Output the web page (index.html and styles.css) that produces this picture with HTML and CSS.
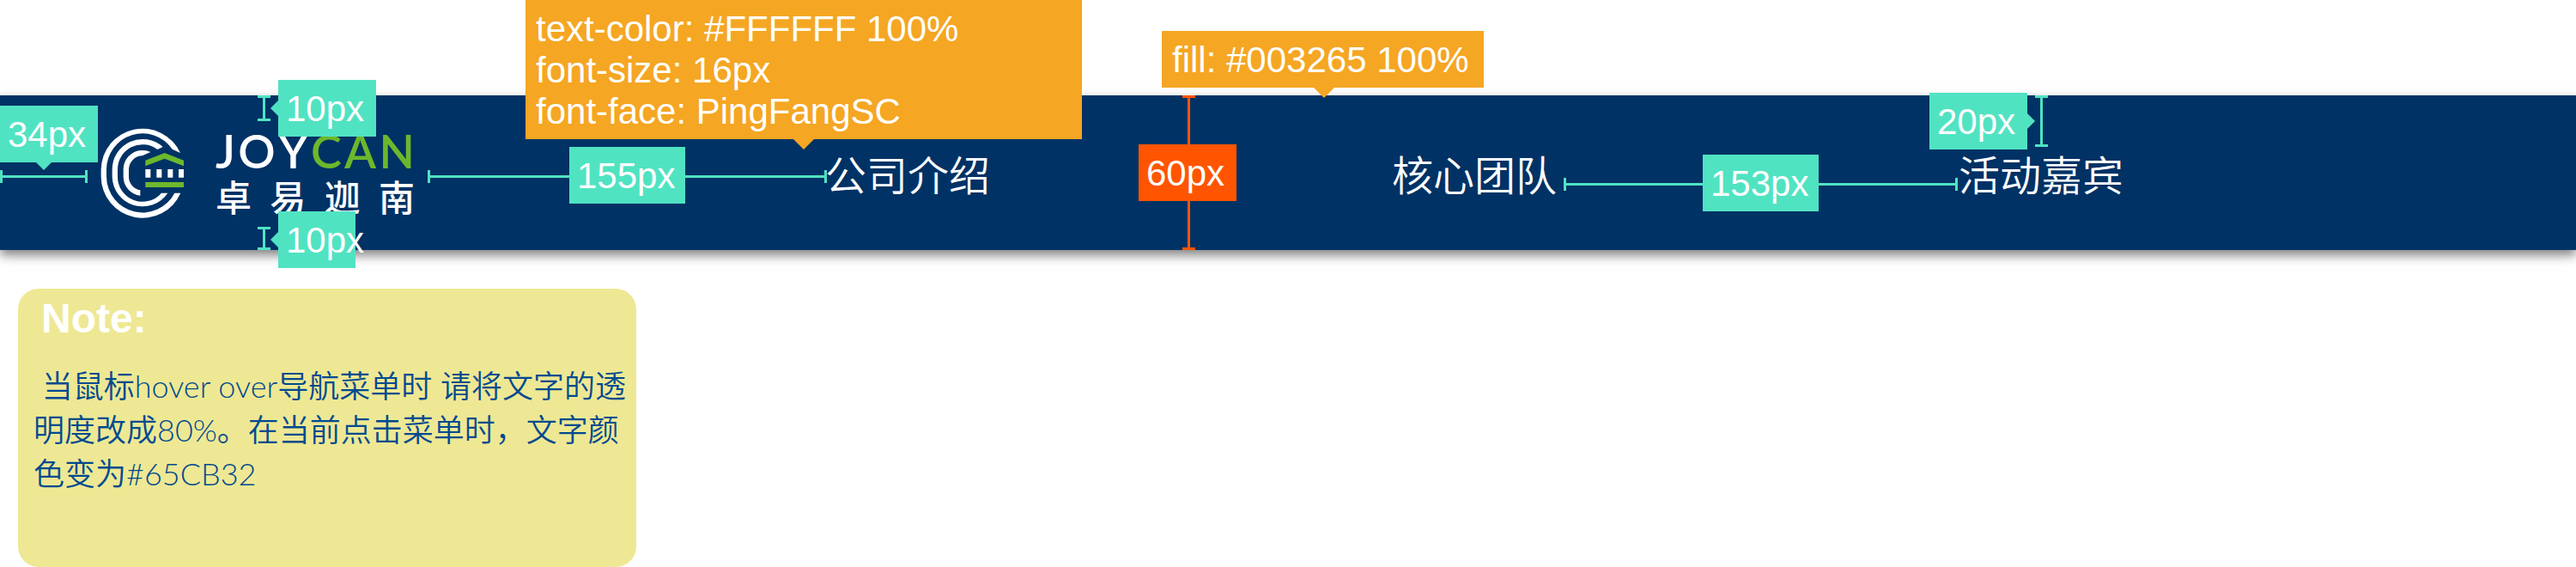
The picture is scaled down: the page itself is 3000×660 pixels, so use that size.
FILE: index.html
```html
<!DOCTYPE html>
<html lang="zh-CN">
<head>
<meta charset="utf-8">
<title>JOYCAN 导航规范</title>
<meta name="viewport" content="width=device-width, initial-scale=1">
<link rel="stylesheet" href="styles.css">
</head>
<body>
<div class="board">
  <header class="header">
    <a class="logo" href="#">
      <svg class="logo-mark" viewBox="351 177 294 321" aria-hidden="true">
        <g fill="#fff">
          <path d="M630 267A145 145 0 0 0 353 325V350A145 145 0 0 0 631 407H610A126 126 0 0 1 372 350V325A126 126 0 0 1 602 254Z"/>
          <path d="M569 246A106 106 0 0 0 392 325V350A106 106 0 0 0 586 407H564A87 87 0 0 1 411 350V325A87 87 0 0 1 550 255Z"/>
          <path d="M526 264A67 67 0 0 0 431 325V350A67 67 0 0 0 490 416V397A48 48 0 0 1 450 350V325A48 48 0 0 1 497 277Z"/>
          <path d="M508 324h18v29h-18zM547 324h18v29h-18zM586 324h18v29h-18zM624 324h18v29h-18z"/>
        </g>
        <path fill="#6cb82c" d="M508 293L575 267L642 293V313L575 287L508 313ZM508 369H642V387H508Z"/>
      </svg>
      <span class="logo-words">
        <span class="logo-en"><span>J</span><span>O</span><span>Y</span><span class="green">C</span><span class="green">A</span><span class="green">N</span></span>
        <span class="logo-cn"><span>卓</span><span>易</span><span>迦</span><span>南</span></span>
      </span>
    </a>
    <nav class="nav">
      <a href="#">公司介绍</a>
      <a href="#">核心团队</a>
      <a href="#">活动嘉宾</a>
    </nav>
  </header>

  <section class="note">
    <h2>Note:</h2>
    <p>&nbsp;当鼠标hover over导航菜单时 请将文字的透<br>明度改成80%。在当前点击菜单时，文字颜<br>色变为#65CB32</p>
  </section>

  <div class="ruler across left-space"></div>
  <div class="ruler across logo-space"></div>
  <div class="ruler across item-space"></div>
  <div class="ruler down top-space"></div>
  <div class="ruler down bottom-space"></div>
  <div class="ruler down text-space"></div>
  <div class="ruler down bar-height"></div>

  <div class="tag arrow-down left-space-tag">34px</div>
  <div class="tag arrow-left top-space-tag">10px</div>
  <div class="tag arrow-left bottom-space-tag">10px</div>
  <div class="tag logo-space-tag">155px</div>
  <div class="tag item-space-tag">153px</div>
  <div class="tag arrow-right text-space-tag">20px</div>
  <div class="tag bar-height-tag">60px</div>
  <div class="tag spec arrow-down font-spec">text-color: #FFFFFF 100%<br>font-size: 16px<br>font-face: PingFangSC</div>
  <div class="tag spec arrow-down fill-spec">fill: #003265 100%</div>
</div>
</body>
</html>
```
FILE: styles.css
```css
* {
  box-sizing: border-box;
}

body {
  margin: 0;
  background: #fff;
  font-family: "Liberation Sans", "Noto Sans CJK SC", sans-serif;
}

.board {
  position: relative;
  padding-top: 111px;
  overflow: hidden;
}

/* Navigation bar */
.header {
  display: flex;
  align-items: center;
  min-height: 180px;
  padding-left: 117px;
  background: #003265;
  box-shadow: 0 6px 12px rgba(0, 0, 0, 0.5);
}

.logo {
  display: flex;
  align-items: center;
  gap: 36px;
  color: #fff;
  text-decoration: none;
}

.logo-mark {
  width: 98px;
  height: 107px;
}

.logo-words {
  display: flex;
  flex-direction: column;
  width: 232px;
}

.logo-en,
.logo-cn {
  display: flex;
  justify-content: space-between;
}

.logo-en {
  font: 600 54px/54px Lato, sans-serif;
}

.logo-cn {
  font: 500 42px/50px "Noto Sans CJK SC", sans-serif;
}

.green {
  color: #6cb82c;
}

.nav {
  display: flex;
  gap: 468px;
  margin-left: 478px;
}

.nav a {
  color: #fff;
  font: 350 48px/72px "Noto Sans CJK SC", sans-serif;
  text-decoration: none;
  white-space: nowrap;
}

.nav a:hover {
  opacity: 0.8;
}

.nav a:active {
  color: #65cb32;
}

/* Note card */
.note {
  width: 720px;
  min-height: 324px;
  margin: 45px 0 0 21px;
  padding: 6px 0 0 18px;
  border-radius: 24px;
  background: #eee894;
}

.note h2 {
  margin: 0 0 25px;
  padding-left: 9px;
  color: #fff;
  font: bold 48px/57px "Liberation Sans", sans-serif;
}

.note p {
  margin: 0;
  color: #004a8f;
  font: 350 36px/51px Lato, "Noto Sans CJK SC", sans-serif;
  white-space: nowrap;
}

/* Dimension rulers */
.ruler {
  position: absolute;
  color: #50e3c2;
}

.ruler::before {
  content: "";
  position: absolute;
  background: currentColor;
}

.across {
  height: 15px;
  border: solid;
  border-width: 0 3px;
}

.across::before {
  top: 6px;
  left: 0;
  right: 0;
  height: 3px;
}

.down {
  width: 15px;
  border: solid;
  border-width: 3px 0;
}

.down::before {
  top: 0;
  bottom: 0;
  left: 6px;
  width: 3px;
}

.left-space { left: 0; top: 198px; width: 102px; }
.logo-space { left: 498px; top: 198px; width: 465px; }
.item-space { left: 1821px; top: 207px; width: 459px; }
.top-space { left: 300px; top: 111px; height: 30px; }
.bottom-space { left: 300px; top: 264px; height: 27px; }
.text-space { left: 2370px; top: 111px; height: 60px; }
.bar-height { left: 1377px; top: 111px; height: 180px; color: #ff5500; }

/* Labels */
.tag {
  position: absolute;
  width: 114px;
  padding: 10px 9px 8px;
  background: #50e3c2;
  color: #fff;
  font-size: 42px;
  line-height: 48px;
  white-space: nowrap;
}

.tag::after {
  position: absolute;
  border: 9px solid transparent;
}

.arrow-down::after {
  content: "";
  top: 100%;
  left: 42px;
  border-top-color: #50e3c2;
}

.arrow-left::after {
  content: "";
  top: 24px;
  right: 100%;
  border-right-color: #50e3c2;
  border-left-width: 0;
}

.arrow-right::after {
  content: "";
  top: 24px;
  left: 100%;
  border-left-color: #50e3c2;
  border-right-width: 0;
}

.left-space-tag { left: 0; top: 123px; }
.top-space-tag { left: 324px; top: 93px; }
.bottom-space-tag { left: 324px; top: 246px; width: 90px; }
.logo-space-tag { left: 663px; top: 171px; width: 135px; }
.item-space-tag { left: 1983px; top: 180px; width: 135px; }
.text-space-tag { left: 2247px; top: 108px; }
.bar-height-tag { left: 1326px; top: 168px; background: #ff5500; }

.spec {
  padding: 10px 12px 8px;
  background: #f5a623;
}

.spec::after {
  border-width: 12px;
  border-top-color: #f5a623;
}

.font-spec { left: 612px; top: 0; width: 648px; }
.font-spec::after { left: 312px; }
.fill-spec { left: 1353px; top: 36px; width: 375px; }
.fill-spec::after { left: 177px; }
```
